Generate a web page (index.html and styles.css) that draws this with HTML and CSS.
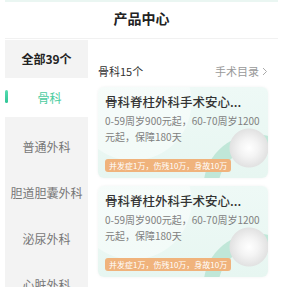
FILE: index.html
```html
<!DOCTYPE html>
<html lang="zh">
<head>
<meta charset="utf-8">
<title>产品中心</title>
<link rel="stylesheet" href="styles.css">
</head>
<body>
<div class="page">
  <div class="topline"></div>
  <header class="header">产品中心</header>
  <main class="main">
    <nav class="sidebar">
      <div class="side-all">全部39个</div>
      <div class="side-active"><span class="bar"></span>骨科</div>
      <div class="side-list">
        <div class="side-item">普通外科</div>
        <div class="side-item">胆道胆囊外科</div>
        <div class="side-item">泌尿外科</div>
        <div class="side-item">心脏外科</div>
      </div>
    </nav>
    <section class="content">
      <div class="content-head">
        <span class="count">骨科15个</span>
        <span class="catalog">手术目录 <svg class="chev" width="6" height="9" viewBox="0 0 6 9"><path d="M1 1l3.5 3.5L1 8" fill="none" stroke="#aaa" stroke-width="1"/></svg></span>
      </div>
      <div class="card">
        <div class="card-title">骨科脊柱外科手术安心...</div>
        <div class="card-desc">0-59周岁900元起，60-70周岁1200元起，保障180天</div>
        <div class="badge">并发症1万，伤残10万，身故10万</div>
      </div>
      <div class="card">
        <div class="card-title">骨科脊柱外科手术安心...</div>
        <div class="card-desc">0-59周岁900元起，60-70周岁1200元起，保障180天</div>
        <div class="badge">并发症1万，伤残10万，身故10万</div>
      </div>
    </section>
  </main>
</div>
</body>
</html>
```
FILE: styles.css
```css
* { box-sizing: border-box; }
html, body { margin: 0; padding: 0; background: #fff; }
body {
  font-family: "Noto Sans CJK SC", "Noto Sans", sans-serif;
  width: 283px;
  height: 287px;
  overflow: hidden;
}
.page { padding: 0 5px; height: 287px; overflow: hidden; }
.topline { height: 2px; background: #eaf6f2; }
.header {
  height: 37px;
  line-height: 33px;
  text-align: center;
  font-size: 14px;
  font-weight: bold;
  color: #222;
  border-bottom: 1px solid #f1f1f1;
}
.main { display: flex; height: 248px; overflow: hidden; }
.sidebar {
  width: 83px;
  flex: none;
  margin-top: 1px;
}
.side-all {
  height: 38px;
  line-height: 38px;
  text-align: center;
  font-size: 12px;
  font-weight: bold;
  color: #222;
  background: #f3f3f3;
}
.side-active {
  height: 39px;
  display: flex;
  align-items: center;
  justify-content: center;
  padding-left: 6px;
  font-size: 12px;
  color: #4ccca0;
  background: #fff;
  position: relative;
}
.bar {
  position: absolute;
  left: 0;
  top: 12px;
  width: 3px;
  height: 13px;
  border-radius: 2px;
  background: linear-gradient(#55dcb0, #2fc596);
}
.side-list {
  background: #f3f3f3;
  padding-top: 7px;
  height: 170px;
}
.side-item {
  height: 46px;
  line-height: 46px;
  text-align: center;
  font-size: 12px;
  color: #777;
}
.content {
  flex: 1;
  padding: 24px 10px 0 10px;
}
.content-head {
  display: flex;
  justify-content: space-between;
  align-items: center;
  height: 16px;
  margin-bottom: 8px;
}
.count { font-size: 11px; color: #333; }
.catalog {
  font-size: 11px;
  color: #999;
  display: flex;
  align-items: center;
  gap: 3px;
}
.card {
  height: 91px;
  border-radius: 6px;
  margin-bottom: 8px;
  padding: 7px 7px 6px 7px;
  box-shadow: 0 0 3px rgba(0, 0, 0, 0.06);
  background:
    radial-gradient(circle at 151px 61px, #ffffff 0, #f4f4f4 9px, #e2e2e2 19px, rgba(226,226,226,0) 20px),
    radial-gradient(circle at 158px 100px, rgba(191,230,216,0) 37px, #c0e7d8 38px, #c0e7d8 52px, rgba(191,230,216,0) 53px),
    radial-gradient(circle at 35px 15px, rgba(255,255,255,0.45) 58px, rgba(255,255,255,0) 59px),
    linear-gradient(#eef9f6, #e7f6f1);
}
.card-title {
  font-size: 12.5px;
  line-height: 16px;
  color: #333;
  font-weight: 500;
  white-space: nowrap;
}
.card-desc {
  margin-top: 3px;
  font-size: 10px;
  line-height: 16px;
  color: #808080;
  width: 155px;
}
.badge {
  display: inline-block;
  margin-top: 14px;
  height: 13px;
  line-height: 13px;
  padding: 0 4px;
  border-radius: 3px;
  background: #f0b37c;
  color: #fff;
  font-size: 8px;
  white-space: nowrap;
}
```
